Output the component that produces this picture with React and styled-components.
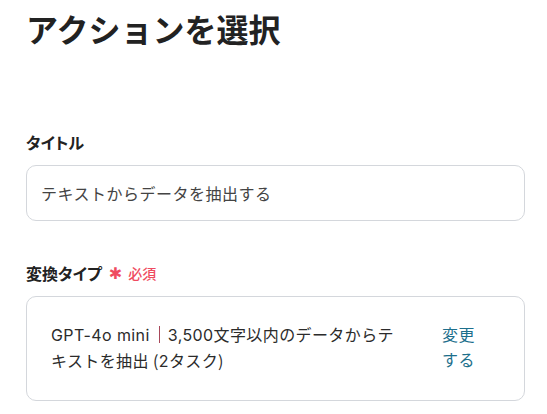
import React from "react";
import styled, { createGlobalStyle } from "styled-components";

const GlobalStyle = createGlobalStyle`
  body {
    margin: 0;
    background: #fff;
    font-family: Inter, "Noto Sans CJK JP", sans-serif;
    color: #2b2b2b;
  }
`;

const Page = styled.div`
  width: 547px;
  height: 414px;
  padding: 4px 22px 0 26px;
  box-sizing: border-box;
  overflow: hidden;
`;

const Heading = styled.h1`
  margin: 0;
  font-family: "Noto Sans CJK JP", sans-serif;
  font-size: 32px;
  font-weight: 700;
  line-height: 48px;
  color: #222;
`;

const Field = styled.div`
  margin-top: ${(p) => p.$top}px;
`;

const Label = styled.div`
  display: flex;
  align-items: center;
  font-family: "Noto Sans CJK JP", sans-serif;
  font-size: 16px;
  font-weight: 700;
  line-height: 22px;
  color: #222;
  font-feature-settings: "palt";
`;

const Star = styled.span`
  margin: 3px 6px 0 7px;
  font-family: "DejaVu Sans", sans-serif;
  font-size: 16px;
  font-weight: 700;
  color: #ef4b60;
`;

const Required = styled.span`
  font-size: 14px;
  font-weight: 500;
  color: #ef4b60;
`;

const InputBox = styled.div`
  margin-top: 12px;
  height: 54px;
  display: flex;
  align-items: center;
  padding: 0 14px;
  border: 1px solid #d4d7dc;
  border-radius: 10px;
  font-size: 16px;
  letter-spacing: 0.5px;
  color: #444;
`;

const SelectBox = styled.div`
  margin-top: 11px;
  display: flex;
  gap: 34px;
  padding: 26px 46px 26px 24px;
  border: 1px solid #d4d7dc;
  border-radius: 10px;
  font-size: 16px;
  line-height: 25px;
  letter-spacing: 0.4px;
`;

const Desc = styled.div`
  flex: 1;
  color: #2b2b2b;
`;

const Sep = styled.span`
  display: inline-block;
  width: 1px;
  height: 17px;
  background: #a8485a;
  margin: 0 8px 0 9px;
  vertical-align: -2px;
`;

const Paren = styled.span`
  font-family: "Noto Sans CJK JP", sans-serif;
  margin-left: ${(p) => (p.$open ? 4 : 0)}px;
`;

const Change = styled.a`
  width: 36px;
  color: #1d6f8c;
  cursor: pointer;
`;

export default function App() {
  return (
    <Page>
      <GlobalStyle />
      <Heading>アクションを選択</Heading>
      <Field $top={79}>
        <Label>タイトル</Label>
        <InputBox>テキストからデータを抽出する</InputBox>
      </Field>
      <Field $top={39}>
        <Label>
          変換タイプ<Star>✱</Star>
          <Required>必須</Required>
        </Label>
        <SelectBox>
          <Desc>
            GPT-4o mini<Sep />3,500文字以内のデータからテキストを抽出
            <Paren $open>(</Paren>2タスク<Paren>)</Paren>
          </Desc>
          <Change>変更する</Change>
        </SelectBox>
      </Field>
    </Page>
  );
}
